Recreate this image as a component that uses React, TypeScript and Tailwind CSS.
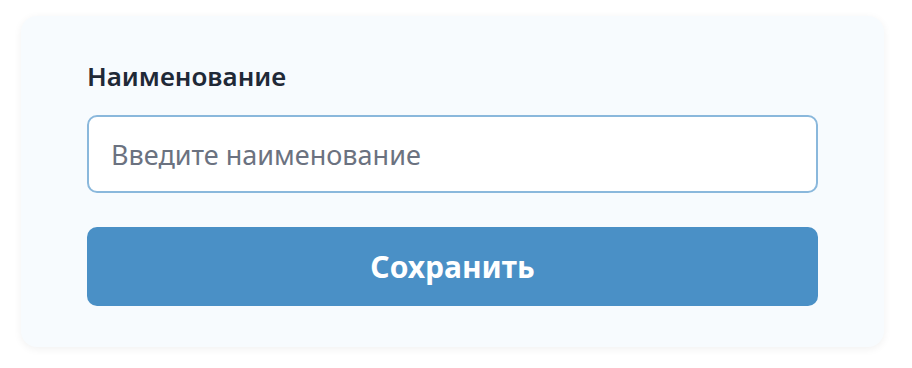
import React from "react";

export default function App() {
  return (
    <div className="min-h-screen bg-white px-[21px] pt-[16px] font-['Noto_Sans',sans-serif]">
      <div className="w-[863px] rounded-2xl bg-[#f7fbfe] px-[66px] pt-[42px] pb-[41px] shadow-[0_2px_8px_rgba(0,0,0,0.06)]">
        <label className="block text-[26px] leading-[36px] font-semibold text-[#1f2937]">
          Наименование
        </label>
        <input
          type="text"
          placeholder="Введите наименование"
          className="mt-[21px] block h-[78px] w-full rounded-[10px] border-2 border-[#8ab8dc] bg-white px-[22px] text-[27px] text-[#1f2937] outline-none placeholder:text-[#6b7280]"
        />
        <button className="mt-[34px] block h-[79px] w-full rounded-[10px] bg-[#4a90c6] text-[30px] font-bold text-white">
          Сохранить
        </button>
      </div>
    </div>
  );
}
